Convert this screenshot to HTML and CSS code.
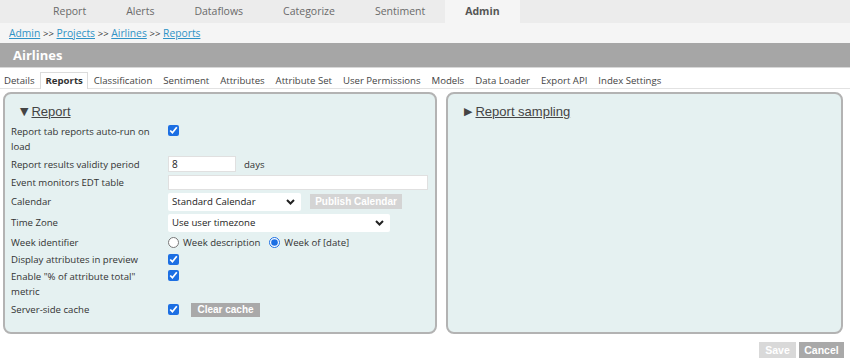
FILE: index.html
```html
<!DOCTYPE html>
<html>
<head>
<meta charset="utf-8">
<link rel="stylesheet" href="styles.css">
</head>
<body>
<div class="topnav">
  <span class="tnav">Report</span>
  <span class="tnav">Alerts</span>
  <span class="tnav">Dataflows</span>
  <span class="tnav">Categorize</span>
  <span class="tnav">Sentiment</span>
  <span class="tnav active">Admin</span>
</div>
<div class="crumbs">
  <a href="#">Admin</a> <span class="sep">&gt;&gt;</span> <a href="#">Projects</a> <span class="sep">&gt;&gt;</span> <a href="#">Airlines</a> <span class="sep">&gt;&gt;</span> <a href="#">Reports</a>
</div>
<div class="titlebar">Airlines</div>
<div class="subtabs">
  <span class="stab">Details</span>
  <span class="stab active">Reports</span>
  <span class="stab">Classification</span>
  <span class="stab">Sentiment</span>
  <span class="stab">Attributes</span>
  <span class="stab">Attribute Set</span>
  <span class="stab">User Permissions</span>
  <span class="stab">Models</span>
  <span class="stab">Data Loader</span>
  <span class="stab">Export API</span>
  <span class="stab">Index Settings</span>
</div>
<div class="panels">
  <div class="panel left">
    <div class="phead"><span class="tri">&#9660;</span><span class="plink">Report</span></div>
    <div class="form">
      <div class="lbl two">Report tab reports auto-run on load</div>
      <div class="ctl top"><input type="checkbox" class="cb" checked></div>

      <div class="lbl">Report results validity period</div>
      <div class="ctl"><input type="text" class="txt short" value="8"><span class="unit">days</span></div>

      <div class="lbl">Event monitors EDT table</div>
      <div class="ctl"><input type="text" class="txt long" value=""></div>

      <div class="lbl">Calendar</div>
      <div class="ctl">
        <span class="sel cal">Standard Calendar<svg class="chev" width="9" height="6" viewBox="0 0 9 6"><path d="M1 1 L4.5 4.5 L8 1" fill="none" stroke="#222" stroke-width="2"/></svg></span>
        <span class="btn pub">Publish Calendar</span>
      </div>

      <div class="lbl">Time Zone</div>
      <div class="ctl">
        <span class="sel tz">Use user timezone<svg class="chev" width="9" height="6" viewBox="0 0 9 6"><path d="M1 1 L4.5 4.5 L8 1" fill="none" stroke="#222" stroke-width="2"/></svg></span>
      </div>

      <div class="lbl">Week identifier</div>
      <div class="ctl">
        <input type="radio" name="wk" class="rd"><span class="rl">Week description</span>
        <input type="radio" name="wk" class="rd" checked><span class="rl">Week of [date]</span>
      </div>

      <div class="lbl">Display attributes in preview</div>
      <div class="ctl"><input type="checkbox" class="cb" checked></div>

      <div class="lbl two">Enable "% of attribute total" metric</div>
      <div class="ctl top"><input type="checkbox" class="cb" checked></div>

      <div class="lbl">Server-side cache</div>
      <div class="ctl"><input type="checkbox" class="cb" checked><span class="btn clear">Clear cache</span></div>
    </div>
  </div>
  <div class="panel right">
    <div class="phead r"><span class="tri">&#9654;</span><span class="plink">Report sampling</span></div>
  </div>
</div>
<div class="actions">
  <span class="btn save">Save</span>
  <span class="btn cancel">Cancel</span>
</div>
</body>
</html>
```
FILE: styles.css
```css
* { box-sizing: border-box; }
body {
  margin: 0;
  background: #fff;
  font-family: "Open Sans", "DejaVu Sans", sans-serif;
  color: #333;
}
.topnav {
  display: flex;
  height: 23px;
  background: #ececec;
  padding-left: 33px;
}
.tnav {
  padding: 0 20px;
  line-height: 23px;
  font-size: 10.5px;
  color: #6a6a6a;
}
.tnav.active {
  background: #f5f5f5;
  font-weight: bold;
  color: #555;
}
.crumbs {
  height: 20px;
  line-height: 20px;
  background: #f5f5f5;
  padding-left: 9px;
  font-size: 10.3px;
  color: #333;
}
.crumbs a { color: #2f93c6; text-decoration: underline; }
.crumbs .sep { font-size: 9.5px; }
.titlebar {
  height: 25px;
  line-height: 24px;
  background: #a6a6a6;
  color: #fff;
  font-weight: bold;
  font-size: 13px;
  padding-left: 13px;
  border-bottom: 1px solid #d8d8d8;
}
.subtabs {
  display: flex;
  height: 21px;
  padding: 4px 0 0 0;
  border-bottom: 1px solid #e2e2e2;
}
.stab {
  padding: 0 4.5px;
  font-size: 9.6px;
  line-height: 15px;
  color: #444;
  border: 1px solid transparent;
  border-bottom: none;
}
.stab:first-child { padding-left: 3px; }
.stab.active {
  font-weight: bold;
  color: #333;
  background: #fff;
  border-color: #dcdcdc;
  margin-bottom: -1px;
  height: 17px;
}
.panels {
  display: flex;
  gap: 9px;
  padding: 3px 7px 0 3px;
}
.panel {
  height: 242px;
  background: #e5f1f1;
  border: 2px solid #b3b3b3;
  border-radius: 8px;
}
.panel.left { width: 434px; }
.panel.right { flex: 1; }
.phead {
  margin: 10px 0 0 15px;
  height: 15px;
  line-height: 15px;
  font-family: "Liberation Sans", Arial, sans-serif;
  font-size: 13px;
  color: #444;
  display: flex;
  align-items: center;
}
.phead.r { margin-left: 16px; }
.tri { font-size: 11px; margin-right: 3px; color: #444; font-family: "DejaVu Sans", sans-serif; }
.plink { text-decoration: underline; }
.form {
  display: grid;
  grid-template-columns: 157px 1fr;
  grid-template-rows: 30px 16px 16px 19px 19px 16px 15px 30px 17px;
  row-gap: 2px;
  margin-top: 5px;
  padding-left: 6px;
  font-size: 9.6px;
}
.lbl {
  display: flex;
  align-items: center;
  color: #333;
  line-height: 15px;
  padding-right: 6px;
}
.lbl.two { align-items: flex-start; }
.ctl {
  display: flex;
  align-items: center;
}
.ctl.top { align-items: flex-start; padding-top: 1px; }
.cb {
  width: 11px;
  height: 11px;
  margin: 0;
  accent-color: #1c6fe3;
}
.rd {
  width: 11px;
  height: 11px;
  margin: 0 4px 0 0;
  accent-color: #1c6fe3;
}
.rl { margin-right: 9px; }
.txt {
  height: 16px;
  border: 1px solid #e0e0e0;
  background: #fff;
  font-family: "Open Sans", sans-serif;
  font-size: 10px;
  padding: 0 3px;
  color: #222;
  outline: none;
}
.txt.short { width: 68px; }
.txt.long { width: 260px; height: 15px; }
.unit { margin-left: 8px; }
.sel {
  position: relative;
  display: inline-block;
  height: 18px;
  line-height: 18px;
  background: #fff;
  border-radius: 2px;
  padding-left: 4px;
  color: #222;
}
.sel.cal { width: 133px; }
.sel.tz { width: 222px; }
.chev { position: absolute; right: 6px; top: 6px; }
.btn {
  display: inline-block;
  font-family: "Liberation Sans", Arial, sans-serif;
  font-weight: bold;
  color: #fff;
  text-align: center;
}
.pub {
  margin-left: 9px;
  width: 92px;
  height: 15px;
  line-height: 15px;
  font-size: 10px;
  background: #d4d4d4;
}
.clear {
  margin-left: 12px;
  width: 69px;
  height: 14px;
  line-height: 14px;
  font-size: 10px;
  background: #a9a9a9;
}
.actions {
  display: flex;
  justify-content: flex-end;
  gap: 3px;
  padding: 8px 6px 0 0;
}
.save, .cancel {
  height: 16px;
  line-height: 16px;
  font-size: 10.5px;
}
.save { width: 37px; background: #d9d9d9; }
.cancel { width: 45px; background: #a9a9a9; }
```
